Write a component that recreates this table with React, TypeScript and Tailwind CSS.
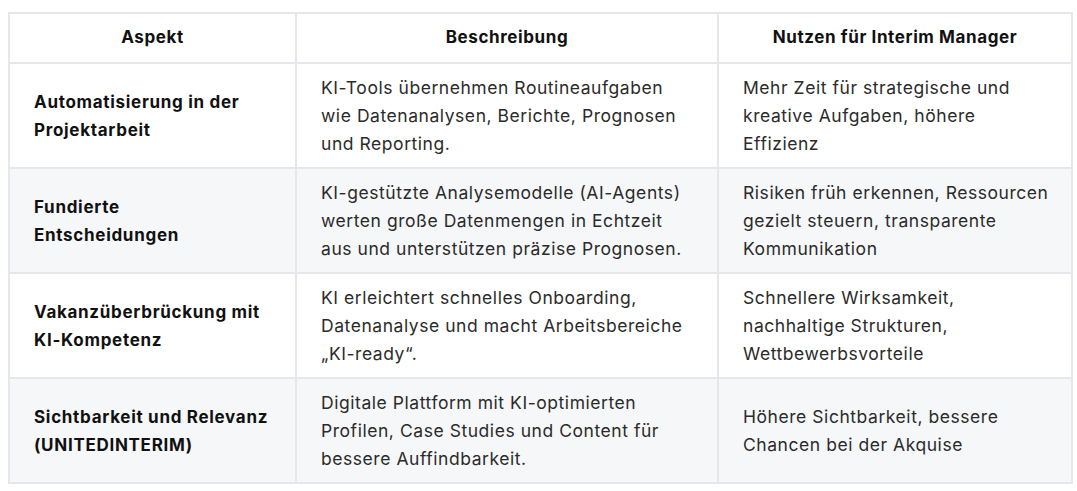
const rows = [
  {
    aspect: ["Automatisierung in der", "Projektarbeit"],
    beschreibung: ["KI-Tools übernehmen Routineaufgaben", "wie Datenanalysen, Berichte, Prognosen", "und Reporting."],
    nutzen: ["Mehr Zeit für strategische und", "kreative Aufgaben, höhere", "Effizienz"],
  },
  {
    aspect: ["Fundierte", "Entscheidungen"],
    beschreibung: ["KI-gestützte Analysemodelle (AI-Agents)", "werten große Datenmengen in Echtzeit", "aus und unterstützen präzise Prognosen."],
    nutzen: ["Risiken früh erkennen, Ressourcen", "gezielt steuern, transparente", "Kommunikation"],
  },
  {
    aspect: ["Vakanzüberbrückung mit", "KI-Kompetenz"],
    beschreibung: ["KI erleichtert schnelles Onboarding,", "Datenanalyse und macht Arbeitsbereiche", "„KI-ready“."],
    nutzen: ["Schnellere Wirksamkeit,", "nachhaltige Strukturen,", "Wettbewerbsvorteile"],
  },
  {
    aspect: ["Sichtbarkeit und Relevanz", "(UNITEDINTERIM)"],
    beschreibung: ["Digitale Plattform mit KI-optimierten", "Profilen, Case Studies und Content für", "bessere Auffindbarkeit."],
    nutzen: ["Höhere Sichtbarkeit, bessere", "Chancen bei der Akquise"],
  },
];

function Lines({ lines }: { lines: string[] }) {
  return (
    <>
      {lines.map((l) => (
        <span key={l} className="block whitespace-nowrap">
          {l}
        </span>
      ))}
    </>
  );
}

export default function App() {
  return (
    <div className="min-h-screen bg-white pl-2 pt-3 font-['Inter',sans-serif]">
      <table className="w-[1063px] table-fixed border-collapse border-2 border-[#e6e7eb]">
        <colgroup>
          <col className="w-[287px]" />
          <col className="w-[422px]" />
          <col className="w-[354px]" />
        </colgroup>
        <thead>
          <tr className="h-[50px]">
            {["Aspekt", "Beschreibung", "Nutzen für Interim Manager"].map((h) => (
              <th key={h} className="border-2 border-[#e6e7eb] px-6 text-center text-[17px] font-bold tracking-[0.6px] text-[#111]">
                {h}
              </th>
            ))}
          </tr>
        </thead>
        <tbody>
          {rows.map((row, i) => (
            <tr key={row.aspect[0]} className={i % 2 === 1 ? "h-[105px] bg-[#f6f7f9]" : "h-[105px] bg-white"}>
              <td className="border-2 border-[#e6e7eb] px-6 text-[17px] leading-7 font-bold tracking-[0.7px] text-[#111]">
                <Lines lines={row.aspect} />
              </td>
              <td className="border-2 border-[#e6e7eb] px-6 text-[17.5px] leading-7 tracking-[0.55px] text-[#2b2b2b]">
                <Lines lines={row.beschreibung} />
              </td>
              <td className="border-2 border-[#e6e7eb] px-6 text-[17.5px] leading-7 tracking-[0.55px] text-[#2b2b2b]">
                <Lines lines={row.nutzen} />
              </td>
            </tr>
          ))}
        </tbody>
      </table>
    </div>
  );
}
